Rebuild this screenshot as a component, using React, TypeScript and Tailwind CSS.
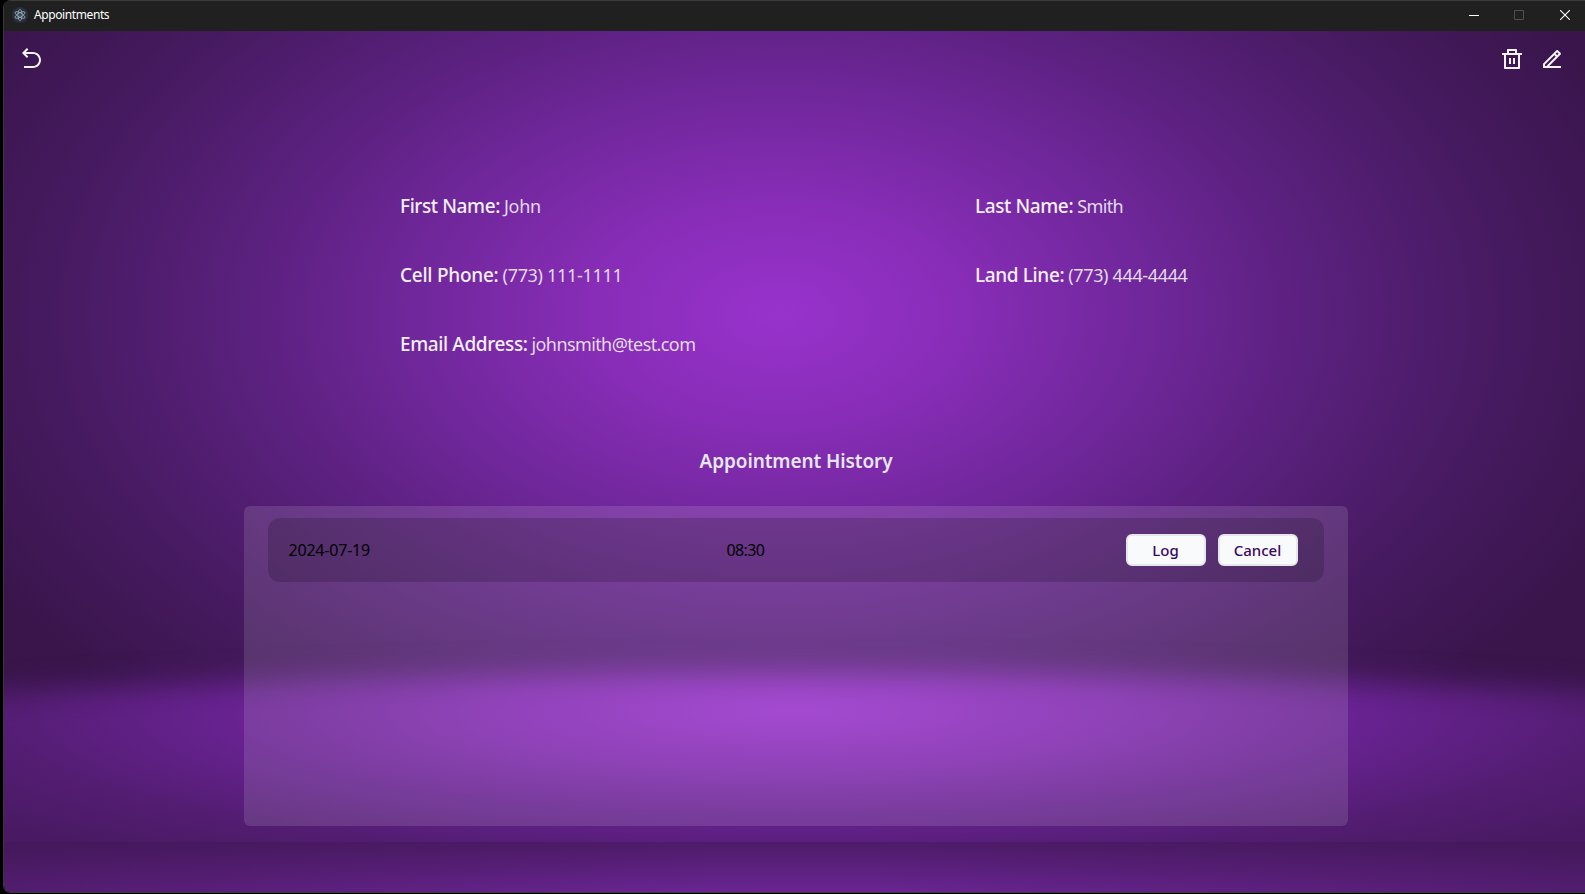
import { RiArrowGoBackLine, RiDeleteBinLine, RiEdit2Line } from "react-icons/ri";

function ElectronMark() {
  return (
    <svg viewBox="0 0 16 16" className="size-4 shrink-0">
      <circle cx="8" cy="8" r="8" fill="#2b2e3b" />
      <g fill="none" stroke="#9fc4cf" strokeWidth="0.7">
        <ellipse cx="8" cy="8" rx="5.6" ry="2.1" transform="rotate(30 8 8)" />
        <ellipse cx="8" cy="8" rx="5.6" ry="2.1" transform="rotate(90 8 8)" />
        <ellipse cx="8" cy="8" rx="5.6" ry="2.1" transform="rotate(150 8 8)" />
      </g>
      <circle cx="8" cy="8" r="0.5" fill="#9fc4cf" />
    </svg>
  );
}

function TitleBar() {
  return (
    <header className="flex h-[31px] shrink-0 items-center border-t border-[#3a3a3a] bg-[#202020] pb-[2px] pl-2 text-white">
      <ElectronMark />
      <span className="ml-[6px] text-[12px] tracking-[-0.4px]">Appointments</span>
      <div className="ml-auto flex items-center">
        <svg width="10" height="10" className="mr-[35px]"><path d="M0 5.5H10" stroke="#fff" /></svg>
        <svg width="10" height="10" className="mr-[36px]"><rect x=".5" y=".5" width="9" height="9" rx=".5" fill="none" stroke="#505050" /></svg>
        <svg width="10" height="10" className="mr-[15px]"><path d="M0 0L10 10M10 0L0 10" stroke="#fff" strokeWidth="1.1" /></svg>
      </div>
    </header>
  );
}

function Field({ label, value, labelClass, valueClass }: { label: string; value: string; labelClass: string; valueClass: string }) {
  return (
    <div className="flex h-7 items-baseline whitespace-pre leading-7 text-[#f3f0f8]">
      <span className={`text-[19px] font-medium ${labelClass}`}>{label}</span>
      <span className={`ml-1 text-[18px] text-[#e1dcee] ${valueClass}`}>{value}</span>
    </div>
  );
}

function Backdrop() {
  return (
    <svg className="absolute inset-0 size-full" viewBox="0 0 1582 861" preserveAspectRatio="none">
      <defs>
        <radialGradient id="wall" gradientUnits="userSpaceOnUse" cx="0" cy="0" r="1" gradientTransform="translate(775 283) scale(910 550)">
          <stop offset="0" stopColor="#9832cc" />
          <stop offset=".2" stopColor="#882db8" />
          <stop offset=".4" stopColor="#70279b" />
          <stop offset=".6" stopColor="#59207c" />
          <stop offset=".8" stopColor="#461a60" />
          <stop offset="1" stopColor="#39154b" />
        </radialGradient>
        <radialGradient id="floor" gradientUnits="userSpaceOnUse" cx="0" cy="0" r="1" gradientTransform="translate(792 680) scale(1020 185)">
          <stop offset="0" stopColor="#9831cc" />
          <stop offset=".3" stopColor="#8129af" />
          <stop offset=".56" stopColor="#672290" />
          <stop offset=".8" stopColor="#531d72" />
          <stop offset="1" stopColor="#491a63" />
        </radialGradient>
        <filter id="soften" x="-10%" y="-30%" width="120%" height="160%">
          <feGaussianBlur stdDeviation="14" />
        </filter>
        <mask id="horizon" maskUnits="userSpaceOnUse" x="0" y="560" width="1582" height="251">
          <path d="M-60 664Q791 614 1642 664V900H-60Z" fill="#fff" filter="url(#soften)" />
        </mask>
        <linearGradient id="footShade" x1="0" y1="0" x2="0" y2="1">
          <stop offset="0" stopColor="#4d1b68" />
          <stop offset="1" stopColor="#6a2593" />
        </linearGradient>
        <linearGradient id="footEdge">
          <stop offset="0" stopColor="#3a154c" stopOpacity=".5" />
          <stop offset=".45" stopColor="#3a154c" stopOpacity="0" />
          <stop offset=".55" stopColor="#3a154c" stopOpacity="0" />
          <stop offset="1" stopColor="#3a154c" stopOpacity=".5" />
        </linearGradient>
      </defs>
      <rect width="1582" height="811" fill="url(#wall)" />
      <rect width="1582" height="811" fill="url(#floor)" mask="url(#horizon)" />
      <rect y="811" width="1582" height="50" fill="url(#footShade)" />
      <rect y="811" width="1582" height="50" fill="url(#footEdge)" />
    </svg>
  );
}

export default function App() {
  return (
    <div className="h-[894px] w-[1585px] overflow-hidden bg-black pb-px pl-[3px] font-['Noto_Sans',sans-serif]">
      <div className="flex h-full flex-col overflow-hidden rounded-l-[8px] border-b border-l border-[#3a3a3a]">
        <TitleBar />
        <main className="relative isolate grow overflow-hidden">
          <Backdrop />
          <div className="relative flex h-full flex-col">
            <nav className="flex items-center px-4 pt-4 text-[#f8f4fb]">
              <button><RiArrowGoBackLine size={24} /></button>
              <div className="ml-auto mr-[5px] flex gap-4">
                <button><RiDeleteBinLine size={24} /></button>
                <button><RiEdit2Line size={24} /></button>
              </div>
            </nav>
            <section className="ml-[396px] mt-[121px] grid w-[900px] grid-cols-[575px_1fr] gap-y-[41px]">
              <Field label="First Name:" value="John" labelClass="tracking-[-0.4px]" valueClass="tracking-[-0.3px]" />
              <Field label="Last Name:" value="Smith" labelClass="tracking-[-0.4px]" valueClass="tracking-[-0.6px]" />
              <Field label="Cell Phone:" value="(773) 111-1111" labelClass="tracking-[-0.25px]" valueClass="tracking-[-0.3px]" />
              <Field label="Land Line:" value="(773) 444-4444" labelClass="tracking-[-0.37px]" valueClass="tracking-[-0.35px]" />
              <Field label="Email Address:" value="johnsmith@test.com" labelClass="tracking-[-0.38px]" valueClass="tracking-[-0.6px]" />
            </section>
            <h2 className="mt-[89px] translate-x-px pl-px text-center text-[19px] leading-7 font-semibold tracking-[-0.1px] text-[#e5e7f0]">Appointment History</h2>
            <section className="mx-auto mt-[31px] h-[320px] w-[1104px] translate-x-px rounded-[6px] bg-white/12 px-6 pt-3">
              <div className="grid h-16 grid-cols-[438px_1fr_auto] items-center rounded-xl bg-black/17 pr-[26px] pl-5 text-[16px] text-black">
                <span className="pl-px tracking-[-0.2px]">2024-07-19</span>
                <span className="pl-px tracking-[-0.6px]">08:30</span>
                <div className="flex gap-3 text-[15px] font-medium text-[#3b0764]">
                  <button className="h-8 w-20 rounded-[6px] border-2 border-gray-200 bg-gray-50">Log</button>
                  <button className="h-8 w-20 rounded-[6px] border-2 border-gray-200 bg-gray-50">Cancel</button>
                </div>
              </div>
            </section>
          </div>
        </main>
      </div>
    </div>
  );
}
